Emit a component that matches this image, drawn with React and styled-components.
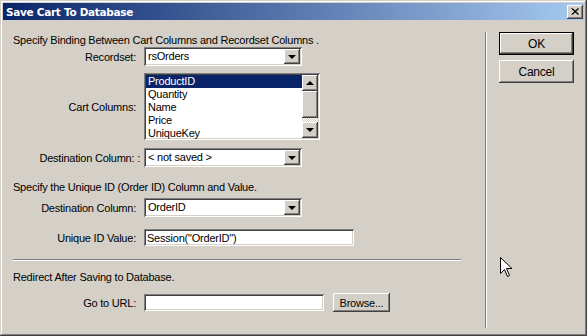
import React from 'react'
import styled, { createGlobalStyle, css } from 'styled-components'

const GlobalStyle = createGlobalStyle`
  html, body {
    margin: 0;
    padding: 0;
    background: #d4d0c8;
  }
  body {
    font-family: "Liberation Sans", Arial, sans-serif;
    font-size: 11px;
    letter-spacing: -0.22px;
    color: #000;
  }
`

const raised = css`
  box-shadow: inset -1px -1px #404040, inset 1px 1px #ffffff,
    inset -2px -2px #808080, inset 2px 2px #d4d0c8;
`

const sunken = css`
  box-shadow: inset 1px 1px #808080, inset -1px -1px #ffffff,
    inset 2px 2px #404040, inset -2px -2px #d4d0c8;
`

const Window = styled.div`
  position: relative;
  width: 587px;
  height: 336px;
  box-sizing: border-box;
  padding: 3px;
  background: #d4d0c8;
  box-shadow: inset -1px -1px #404040, inset 1px 1px #d4d0c8,
    inset -2px -2px #808080, inset 2px 2px #ffffff;
  display: flex;
  flex-direction: column;
`

const TitleBar = styled.div`
  height: 17px;
  display: flex;
  align-items: center;
  justify-content: space-between;
  padding: 0 1px 0 3px;
  background: linear-gradient(to right, #0a246a, #a6caf0);
`

const Title = styled.span`
  color: #fff;
  font-family: "DejaVu Sans", Tahoma, sans-serif;
  font-weight: bold;
  font-size: 10.5px;
  letter-spacing: -0.3px;
`

const CloseButton = styled.div`
  width: 16px;
  height: 14px;
  background: #d4d0c8;
  ${raised};
  display: flex;
  align-items: center;
  justify-content: center;
`

const Body = styled.div`
  flex: 1;
  display: flex;
`

const Main = styled.div`
  width: 482px;
  box-sizing: border-box;
  padding: 14px 0 0 10px;
  display: flex;
  flex-direction: column;
`

const Heading = styled.div`
  line-height: 13px;
  height: 13px;
  margin-top: ${p => p.$gap || 0}px;
  white-space: nowrap;
`

const FieldRow = styled.div`
  display: grid;
  grid-template-columns: 123px auto;
  column-gap: 8px;
  align-items: center;
  margin-top: ${p => p.$gap || 0}px;
`

const Label = styled.span`
  text-align: right;
  white-space: nowrap;
  margin-right: ${p => (p.$overhang ? -4 : 0)}px;
`

const Combo = styled.div`
  width: 158px;
  height: 19px;
  box-sizing: border-box;
  padding: 2px;
  background: #fff;
  ${sunken};
  display: flex;
`

const ComboValue = styled.div`
  flex: 1;
  padding-left: 2px;
  line-height: 15px;
  white-space: nowrap;
`

const ArrowButton = styled.div`
  width: 16px;
  height: ${p => p.$h || 15}px;
  flex: none;
  box-sizing: border-box;
  background: #d4d0c8;
  ${raised};
  display: flex;
  align-items: center;
  justify-content: center;
`

const Triangle = styled.div`
  width: 0;
  height: 0;
  border-left: 4px solid transparent;
  border-right: 4px solid transparent;
  ${p =>
    p.$up
      ? css`border-bottom: 4px solid #000;`
      : css`border-top: 4px solid #000;`}
`

const ListBox = styled.div`
  width: 176px;
  height: 67px;
  box-sizing: border-box;
  padding: 2px;
  background: #fff;
  ${sunken};
  display: flex;
`

const Items = styled.div`
  flex: 1;
  display: flex;
  flex-direction: column;
`

const Item = styled.div`
  height: 13px;
  line-height: 13px;
  padding-left: 2px;
  white-space: nowrap;
  background: ${p => (p.$selected ? '#0a246a' : 'transparent')};
  color: ${p => (p.$selected ? '#fff' : '#000')};
`

const ScrollBar = styled.div`
  width: 16px;
  display: flex;
  flex-direction: column;
`

const Thumb = styled.div`
  height: 27px;
  background: #d4d0c8;
  ${raised};
`

const Track = styled.div`
  flex: 1;
  background-color: #fff;
  background-image: conic-gradient(#d4d0c8 25%, #fff 0 50%, #d4d0c8 0 75%, #fff 0);
  background-size: 2px 2px;
`

const TextField = styled.input`
  width: ${p => p.$w}px;
  height: 17px;
  box-sizing: border-box;
  border: none;
  outline: none;
  margin: 0;
  padding: 0 3px;
  font: inherit;
  letter-spacing: inherit;
  color: #000;
  background: #fff;
  ${sunken};
`

const Separator = styled.div`
  width: 448px;
  height: 0;
  margin-top: 13px;
  border-top: 1px solid #808080;
  border-bottom: 1px solid #ffffff;
`

const Inline = styled.div`
  display: flex;
  align-items: center;
  gap: 9px;
`

const Button = styled.button`
  width: ${p => p.$w || 75}px;
  height: ${p => p.$h || 23}px;
  padding: 0;
  border: none;
  margin: 0;
  font: inherit;
  font-size: ${p => p.$fs || 11}px;
  letter-spacing: inherit;
  color: #000;
  background: #d4d0c8;
  ${p =>
    p.$default
      ? css`
          box-shadow: inset 0 0 0 1px #000, inset -2px -2px #404040,
            inset 2px 2px #ffffff, inset -3px -3px #808080;
        `
      : raised};
`

const VSeparator = styled.div`
  width: 0;
  margin: 12px 0 5px 0;
  border-left: 1px solid #808080;
  border-right: 1px solid #ffffff;
`

const Side = styled.div`
  margin-left: 12px;
  padding-top: 12px;
  display: flex;
  flex-direction: column;
  gap: 5px;
`

const Cursor = styled.svg`
  position: absolute;
  left: 500px;
  top: 257px;
`

const DropDown = ({ value }) => (
  <Combo>
    <ComboValue>{value}</ComboValue>
    <ArrowButton>
      <Triangle />
    </ArrowButton>
  </Combo>
)

const columns = ['ProductID', 'Quantity', 'Name', 'Price', 'UniqueKey']

const App = () => {
  return (
    <Window>
      <GlobalStyle />
      <TitleBar>
        <Title>Save Cart To Database</Title>
        <CloseButton>
          <svg width="8" height="7" viewBox="0 0 8 7">
            <path d="M0.5 0.5 L7 6.5 M1.5 0.5 L8 6.5 M7 0.5 L0.5 6.5 M8 0.5 L1.5 6.5" stroke="#000" strokeWidth="1" />
          </svg>
        </CloseButton>
      </TitleBar>
      <Body>
        <Main>
          <Heading>Specify Binding Between Cart Columns and Recordset Columns .</Heading>
          <FieldRow>
            <Label>Recordset:</Label>
            <DropDown value="rsOrders" />
          </FieldRow>
          <FieldRow $gap={7}>
            <Label>Cart Columns:</Label>
            <ListBox>
              <Items>
                {columns.map((c, i) => (
                  <Item key={c} $selected={i === 0}>{c}</Item>
                ))}
              </Items>
              <ScrollBar>
                <ArrowButton $h={16}>
                  <Triangle $up />
                </ArrowButton>
                <Thumb />
                <Track />
                <ArrowButton $h={16}>
                  <Triangle />
                </ArrowButton>
              </ScrollBar>
            </ListBox>
          </FieldRow>
          <FieldRow $gap={8}>
            <Label $overhang>Destination Column: :</Label>
            <DropDown value="< not saved >" />
          </FieldRow>
          <Heading $gap={14}>Specify the Unique ID (Order ID) Column and Value.</Heading>
          <FieldRow $gap={4}>
            <Label>Destination Column:</Label>
            <DropDown value="OrderID" />
          </FieldRow>
          <FieldRow $gap={12}>
            <Label>Unique ID Value:</Label>
            <TextField $w={210} defaultValue={'Session("OrderID")'} readOnly />
          </FieldRow>
          <Separator />
          <Heading $gap={10}>Redirect After Saving to Database.</Heading>
          <FieldRow $gap={9}>
            <Label>Go to URL:</Label>
            <Inline>
              <TextField $w={180} defaultValue="" readOnly />
              <Button $w={57} $h={19}>Browse...</Button>
            </Inline>
          </FieldRow>
        </Main>
        <VSeparator />
        <Side>
          <Button $default $fs={12}>OK</Button>
          <Button $fs={12}>Cancel</Button>
        </Side>
      </Body>
      <Cursor width="13" height="21" viewBox="0 0 13 21">
        <path d="M0.5 0.5 L0.5 16.5 L4.5 12.5 L7.5 19.5 L9.5 18.5 L6.5 11.5 L12 11.5 Z" fill="#fff" stroke="#000" strokeWidth="1" />
      </Cursor>
    </Window>
  )
}

export default App
